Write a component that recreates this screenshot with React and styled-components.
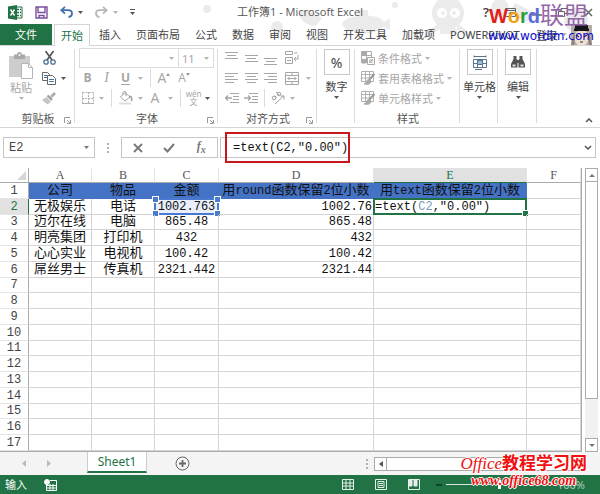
import React from "react";
import styled, { createGlobalStyle, css } from "styled-components";

const GREEN = "#217346";

const Global = createGlobalStyle`
  * { box-sizing: border-box; }
  body { margin: 0; background: #fff; font-family: "Noto Sans", "Noto Sans CJK SC", sans-serif; color: #444; }
  button, input { font: inherit; color: inherit; padding: 0; margin: 0; border: 0; background: none; min-width: 0; }
  svg { display: block; flex: none; }
`;

const Page = styled.div`
  position: relative;
  display: flex;
  flex-direction: column;
  height: 100vh;
  overflow: hidden;
`;

/* ---------- title bar ---------- */
const Backdrop = styled.svg`
  position: absolute;
  top: 0;
  right: 0;
  z-index: -1;
`;
const TitleBar = styled.header`
  display: grid;
  grid-template-columns: 1fr auto 1fr;
  align-items: center;
  height: 24px;
  flex: none;
`;
const QuickAccess = styled.div`
  display: flex;
  align-items: center;
  padding-left: 8px;
  gap: 12px;
`;
const QuickPair = styled.div`
  display: flex;
  align-items: center;
  gap: 5px;
`;
const PlainButton = styled.button`
  display: flex;
  align-items: center;
  justify-content: center;
`;
const Title = styled.h1`
  margin: 0;
  font-size: 11px;
  line-height: 22px;
  font-weight: 400;
  color: #555;
  white-space: pre;
  font-family: "Open Sans", "Noto Sans CJK SC", sans-serif;
`;
const WindowButtons = styled.div`
  display: flex;
  justify-content: flex-end;
  gap: 16px;
  padding-right: 7px;
  font-size: 13px;
  line-height: 20px;
  font-weight: 600;
`;

/* ---------- tabs ---------- */
const Tabs = styled.nav`
  display: flex;
  align-items: stretch;
  gap: 1px;
  height: 22px;
  flex: none;
  border-bottom: 1px solid #d5d5d5;
`;
const Tab = styled.button`
  padding: 0 7px;
  font-size: 11px;
  line-height: 18px;
  white-space: nowrap;
  color: #444;
  ${(p) => p.$file && css`
    background: ${GREEN};
    color: #fff;
    padding: 0 15px;
    margin-right: 1px;
  `}
  ${(p) => p.$active && css`
    color: ${GREEN};
    background: #fff;
    border: 1px solid #d5d5d5;
    border-bottom: 0;
    padding: 0 6px;
    margin-right: 1px;
    margin-bottom: -1px;
    line-height: 16px;
  `}
`;
const Account = styled.div`
  display: flex;
  align-items: center;
  gap: 4px;
  margin-left: auto;
  padding-right: 8px;
  font-size: 11px;
`;

/* ---------- ribbon ---------- */
const Ribbon = styled.section`
  display: flex;
  height: 82px;
  flex: none;
  border-bottom: 1px solid #d5d5d5;
`;
const Group = styled.div`
  position: relative;
  display: flex;
  flex-direction: column;
  width: ${(p) => p.$w}px;
  padding: 2px 3px 0 4px;
  flex: none;
  color: ${(p) => (p.$muted ? "#a6a6a6" : "#444")};
  &::after {
    content: "";
    position: absolute;
    right: 0;
    top: 3px;
    bottom: 4px;
    border-right: 1px solid #dcdcdc;
  }
`;
const GroupBody = styled.div`
  display: flex;
  flex: 1;
  flex-direction: ${(p) => (p.$row ? "row" : "column")};
`;
const GroupLabel = styled.div`
  font-size: 11px;
  line-height: 20px;
  height: 18px;
  text-align: center;
  color: #555;
`;
const Launcher = styled.button`
  position: absolute;
  right: 4px;
  bottom: 3px;
`;
const ToolRow = styled.div`
  display: flex;
  align-items: center;
  height: 20px;
`;
const Tool = styled.button`
  display: flex;
  align-items: center;
  justify-content: center;
  width: ${(p) => p.$w}px;
  height: 18px;
  flex: none;
  font-family: "Open Sans", sans-serif;
  font-size: ${(p) => p.$size || 12}px;
  font-weight: ${(p) => (p.$bold ? 700 : 400)};
  line-height: 16px;
`;
const Italic = styled.i`
  font-family: "Liberation Serif", serif;
  font-size: 14px;
`;
const Under = styled.span`
  border-bottom: 1px solid currentColor;
  line-height: 12px;
`;
const Pinyin = styled.span`
  display: flex;
  flex-direction: column;
  align-items: center;
  font: 8px/8px "Noto Sans", "Noto Sans CJK SC", sans-serif;
`;
const Separator = styled.span`
  width: ${(p) => p.$w}px;
  height: 18px;
  display: flex;
  justify-content: center;
  &::before { content: ""; border-left: 1px solid #dcdcdc; }
`;
const Combo = styled.label`
  display: flex;
  align-items: center;
  justify-content: space-between;
  width: ${(p) => p.$w}px;
  height: 20px;
  padding: 0 4px 0 3px;
  border: 1px solid #dcdcdc;
  margin-right: -1px;
  font-size: 11px;
  input { width: 70%; outline: none; }
`;
const PasteColumn = styled.button`
  display: flex;
  flex-direction: column;
  align-items: center;
  width: 34px;
  padding-top: 4px;
  font-size: 11px;
  line-height: 18px;
  height: 60px;
  color: #a6a6a6;
`;
const ClipTools = styled.div`
  display: flex;
  flex-direction: column;
  padding-left: 3px;
`;
const BigButton = styled.button`
  display: flex;
  flex-direction: column;
  align-items: center;
  font-size: 11px;
  line-height: 19px;
  padding-top: 1px;
  white-space: nowrap;
`;
const BigIcon = styled.span`
  display: flex;
  align-items: center;
  justify-content: center;
  width: 26px;
  height: 26px;
  border: 1px solid #c9c9c9;
  font-size: 14px;
  margin-bottom: 2px;
`;
const StyleTool = styled.button`
  display: flex;
  align-items: center;
  gap: 3px;
  height: 20px;
  padding-left: 2px;
  font-size: 11px;
  white-space: nowrap;
`;
const Collapse = styled.button`
  margin: auto 7px 4px auto;
`;

/* ---------- formula bar ---------- */
const FormulaBar = styled.div`
  display: flex;
  flex: none;
  align-items: stretch;
  height: 39px;
  padding: 9px 4px 9px 3px;
  font: 12px/18px "Liberation Mono", monospace;
`;
const NameBox = styled.label`
  display: flex;
  align-items: center;
  width: 92px;
  border: 1px solid #c6c6c6;
  padding: 0 5px;
  input { flex: 1; outline: none; }
`;
const Grip = styled.span`
  display: flex;
  flex-direction: column;
  gap: 2px;
  justify-content: center;
  align-items: center;
  width: ${(p) => p.$w}px;
  &::before, &::after, i { content: ""; width: 2px; height: 2px; background: #b0b0b0; }
`;
const FormulaButtons = styled.div`
  display: grid;
  grid-template-columns: repeat(3, 1fr);
  width: 97px;
  border: 1px solid #c6c6c6;
  margin-right: 2px;
`;
const Fx = styled.span`
  font: italic 700 12px/16px "Liberation Serif", serif;
  color: #777;
`;
const FormulaBox = styled.label`
  position: relative;
  display: flex;
  align-items: center;
  flex: 1;
  border: 1px solid #c6c6c6;
  padding: 0 3px 0 12px;
  color: #111;
  input { flex: 1; outline: none; }
`;
const RedFrame = styled.span`
  position: absolute;
  left: 4px;
  top: -6px;
  width: 125px;
  height: 31px;
  border: 2px solid #c8161d;
  pointer-events: none;
`;

/* ---------- sheet ---------- */
const SheetArea = styled.main`
  display: flex;
  flex: 1;
  min-height: 0;
  padding-top: 1px;
  background: #fff;
`;
const Sheet = styled.table`
  flex: 1;
  min-width: 0;
  height: 100%;
  table-layout: fixed;
  border-spacing: 0;
  border-right: 1px solid #ababab;
  border-bottom: 1px solid #ababab;
  color: #111;
  font: 12px/14px "Liberation Mono", "Noto Sans CJK SC", monospace;
`;
const Col = styled.col`
  width: ${(p) => p.$w};
`;
const ColHead = styled.th`
  height: 15px;
  padding: 0;
  font: 12px/14px "Liberation Serif", serif;
  color: ${(p) => (p.$on ? GREEN : "#555")};
  background: ${(p) => (p.$on ? "#e1e1e1" : "#fff")};
  border-right: 1px solid ${(p) => (p.$on ? "#e1e1e1" : "#e4e4e4")};
  border-bottom: 1px solid ${(p) => (p.$on ? GREEN : "#ababab")};
`;
const Corner = styled(ColHead)`
  border-right-color: #ababab;
  svg { margin: 0 2px 0 auto; }
`;
const RowHead = styled.th`
  padding: 0;
  font-weight: 400;
  vertical-align: bottom;
  color: ${(p) => (p.$on ? GREEN : "#444")};
  background: ${(p) => (p.$on ? "#e1e1e1" : "#fff")};
  border-right: 1px solid ${(p) => (p.$on ? GREEN : "#ababab")};
  border-bottom: 1px solid #e4e4e4;
`;
const Cell = styled.td`
  position: relative;
  padding: 0 1px;
  white-space: nowrap;
  vertical-align: bottom;
  text-align: ${(p) => p.$align || "center"};
  border-right: 1px solid #d4d4d4;
  border-bottom: 1px solid #d4d4d4;
  ${(p) => p.$head && css`
    background: #4472c4;
    border-color: #4472c4;
  `}
  ${(p) => p.$ref && css`background: #e9effa;`}
`;
const Han = styled.span`
  font-size: 13px;
`;
const RefText = styled.span`
  color: #7f9db9;
`;
const RefFrame = styled.span`
  position: absolute;
  inset: -1px;
  border: 2px solid #4a7ad0;
  pointer-events: none;
`;
const Knob = styled.i`
  position: absolute;
  width: 5px;
  height: 5px;
  background: #4a7ad0;
  outline: 1px solid #fff;
  ${(p) => (p.$top ? "top: -3px;" : "bottom: -3px;")}
  ${(p) => (p.$left ? "left: -3px;" : "right: -3px;")}
`;
const ActiveFrame = styled(RefFrame)`
  border-color: ${GREEN};
  i { background: ${GREEN}; }
`;
const VScroll = styled.div`
  display: flex;
  flex-direction: column;
  width: 13px;
  margin: 0 2px 0 3px;
  flex: none;
`;
const ScrollButton = styled.button`
  display: flex;
  align-items: center;
  justify-content: center;
  width: 13px;
  height: 14px;
  flex: none;
  border: 1px solid #ababab;
  background: #fff;
`;
const VThumb = styled.div`
  flex: 1;
  border: 1px solid #ababab;
  border-top: 0;
  background: #fff;
`;
const VTrack = styled.div`
  height: 39px;
  background: #f1f1f1;
`;

/* ---------- footer ---------- */
const SheetBar = styled.div`
  display: flex;
  align-items: stretch;
  height: 23px;
  flex: none;
  background: #f4f4f4;
`;
const SheetNav = styled.div`
  display: flex;
  align-items: center;
  width: 87px;
  padding-left: 22px;
  gap: 19px;
`;
const SheetTab = styled.button`
  width: 60px;
  height: 21px;
  background: #fff;
  border: 1px solid #ccc;
  border-top: 0;
  border-bottom: 2px solid ${GREEN};
  color: ${GREEN};
  font-size: 12px;
  line-height: 18px;
`;
const AddSheet = styled.button`
  margin-left: 28px;
`;
const HScroll = styled.div`
  display: flex;
  align-items: center;
  margin-left: auto;
  width: 240px;
`;
const HThumb = styled.div`
  flex: 1;
  height: 14px;
  border: 1px solid #ababab;
  border-left: 0;
  background: #fff;
  margin-right: 15px;
`;
const StatusBar = styled.footer`
  display: flex;
  align-items: center;
  height: 19px;
  flex: none;
  padding: 0 15px 0 5px;
  background: ${GREEN};
  color: #fff;
  font-size: 11px;
  line-height: 18px;
`;
const MacroButton = styled.button`
  margin-left: 17px;
`;
const Views = styled.div`
  display: flex;
  gap: 21px;
  margin-left: auto;
  margin-right: 16px;
`;
const Zoom = styled.label`
  display: flex;
  align-items: center;
  gap: 4px;
`;
const ZoomRange = styled.input`
  appearance: none;
  width: 107px;
  height: 1px;
  background: #d7e8de;
  &::-webkit-slider-thumb { appearance: none; width: 3px; height: 9px; background: #fff; }
`;
const ZoomValue = styled.span`
  color: #a9cdb9;
`;

/* ---------- watermarks ---------- */
const TopMark = styled.aside`
  position: absolute;
  right: 6px;
  top: 3px;
  pointer-events: none;
  text-align: center;
  color: #0a0ad0;
  font: 12px/14px "DejaVu Sans", sans-serif;
`;
const MarkTitle = styled.div`
  display: flex;
  align-items: center;
  justify-content: center;
  height: 26px;
  margin-right: 5px;
  font: 700 20px/26px "Liberation Sans", "Noto Sans CJK SC", sans-serif;
`;
const Tint = styled.span`
  color: ${(p) => p.$c};
  ${(p) => p.$large && css`
    font-weight: 400;
    font-size: 24px;
  `}
`;
const BottomMark = styled.aside`
  position: absolute;
  right: 13px;
  bottom: 6px;
  pointer-events: none;
  color: #f01010;
  text-align: center;
  font: italic 700 14px/15px "Liberation Serif", serif;
  text-shadow: 1px 0 #fff, -1px 0 #fff, 0 1px #fff, 0 -1px #fff;
`;
const MarkName = styled.div`
  font: italic 400 17px/18px "Liberation Serif", serif;
`;
const MarkHan = styled.span`
  font: 700 17px/18px "Noto Sans CJK SC", sans-serif;
`;

/* ---------- icons ---------- */
const Caret = ({ c = "#b5b5b5" }) => (
  <svg width="5" height="3" viewBox="0 0 5 3"><path d="M0 0h5L2.500 3z" fill={c} /></svg>
);
const Lines = ({ rows, y = 0 }) => (
  <svg width="13" height="14" viewBox="0 0 13 14">
    {rows.map(([x, w], i) => <path key={i} d={`M${x} ${y + i * 3 + 0.5}h${w}`} stroke="#a6a6a6" />)}
  </svg>
);
const LauncherIcon = () => (
  <svg width="7" height="7" viewBox="0 0 7 7" fill="none" stroke="#999"><path d="M.5 6V.5H6M3 3l3 3M6.500 3v3.500H3" /></svg>
);
const ExcelIcon = () => (
  <svg width="15" height="15" viewBox="0 0 15 15">
    <path d="M8 2h6v11H8" fill="#fff" stroke={GREEN} />
    <path d="M9 4.500h2M9 7.500h2M9 10.500h2M12 4.500h1M12 7.500h1M12 10.500h1" stroke={GREEN} strokeWidth="1.500" />
    <path d="M0 1.500 9 0v15L0 13.500z" fill={GREEN} />
    <path d="M2.500 4.500l4 6M6.500 4.500l-4 6" stroke="#fff" strokeWidth="1.400" />
  </svg>
);
const SaveIcon = () => (
  <svg width="13" height="13" viewBox="0 0 13 13" fill="none" stroke="#7c4f9e" strokeWidth="1.400">
    <path d="M1 1h11v11H1zM3 1v5.500h7V1" /><path d="M4 12V9.500h5V12" />
  </svg>
);
const UndoIcon = ({ c = "#3f6fb0", flip }) => (
  <svg width="13" height="12" viewBox="0 0 13 12" fill="none" stroke={c} strokeWidth="1.800">
    <g transform={flip ? "matrix(-1 0 0 1 13 0)" : undefined}>
      <path d="M5 .8 1.300 4.200 5 7.600" /><path d="M1.500 4.200H8c2.500 0 4 1.500 4 3.300s-1.500 3.300-3.500 3.700" />
    </g>
  </svg>
);
const PasteIcon = () => (
  <svg width="26" height="27" viewBox="0 0 26 27">
    <path d="M1 4h21v21H1z" fill="#cdcdcd" />
    <path d="M6 2.500h3a2.500 2.500 0 0 1 5 0h3V7H6z" fill="#a9a9a9" />
    <circle cx="11.500" cy="3" r="1" fill="#fff" />
    <path d="M13.500 11.500h7l4 4v11h-11z" fill="#fff" stroke="#b5b5b5" /><path d="M20.500 11.500v4h4" fill="none" stroke="#b5b5b5" />
  </svg>
);
const CutIcon = () => (
  <svg width="13" height="14" viewBox="0 0 13 14" fill="none">
    <path d="M2.500 0 9 9M10.500 0 4 9" stroke="#555" strokeWidth="1.700" />
    <circle cx="3" cy="11" r="2.200" stroke="#4a7398" strokeWidth="1.300" /><circle cx="10" cy="11" r="2.200" stroke="#4a7398" strokeWidth="1.300" />
  </svg>
);
const CopyIcon = () => (
  <svg width="14" height="13" viewBox="0 0 14 13" fill="#fff" stroke="#666">
    <path d="M.5.5h5l2 2v6h-7z" /><path d="M2 3.500h3M2 5.500h3" stroke="#4a7398" />
    <path d="M5.500 3.500h5l3 3v6h-8z" /><path d="M7 7.500h5M7 9.500h5" stroke="#4a7398" />
  </svg>
);
const BrushIcon = () => (
  <svg width="14" height="13" viewBox="0 0 14 13">
    <path d="M13 1 9 5" stroke="#aaa" strokeWidth="2.500" /><path d="M5.500 3.500 10 8" stroke="#999" strokeWidth="2" />
    <path d="M4.500 5 9 9.500 5.500 12.500 0 8z" fill="#c4c4c4" />
  </svg>
);
const BorderIcon = () => (
  <svg width="12" height="12" viewBox="0 0 12 12" fill="none" stroke="#b0b0b0"><path d="M.5.500h11v11H.5zM6.500 0v12M0 6.500h12" strokeDasharray="2 1" /><path d="M0 11.500h12" /></svg>
);
const FillIcon = () => (
  <svg width="15" height="14" viewBox="0 0 15 14" fill="none" stroke="#a0a0a0">
    <path d="M7 1.500 12 6 7 10 2.500 6z" /><path d="M5 4V1.500C5 0 8 0 8 1.500V5" /><path d="M12 5c2 1 2 3 1.500 5" strokeWidth="1.600" /><path d="M1 12.500h12" stroke="#ddd" strokeWidth="2" />
  </svg>
);
const WrapIcon = () => (
  <svg width="14" height="14" viewBox="0 0 14 14" fill="none" stroke="#a6a6a6">
    <path d="M.5.500h7v3h-7zM.5 6.500h7v6h-7z" /><path d="M2 9.500h4M9 2h3.500" /><path d="M13 4v4H9.500M11 6 9 8l2 2" />
  </svg>
);
const MergeIcon = () => (
  <svg width="14" height="13" viewBox="0 0 14 13" fill="none" stroke="#a6a6a6">
    <path d="M.5.500h13v12H.500zM0 3.500h14M0 9.500h14M7 0v3.500M7 9.500V13M2.500 6.500h9M4.500 5 3 6.500 4.500 8M9.500 5 11 6.500 9.500 8" />
  </svg>
);
const IndentIcon = ({ right }) => (
  <svg width="14" height="10" viewBox="0 0 14 10" fill="none" stroke="#a6a6a6">
    <path d="M5 .5h9M8 3.500h6M8 6.500h6M5 9.500h9" />
    <path d={right ? "M0 5h6M4 2.500 6.500 5 4 7.500" : "M1 5h6M3 2.500.5 5 3 7.500"} strokeWidth="1.300" />
  </svg>
);
const AngleIcon = () => (
  <svg width="14" height="14" viewBox="0 0 14 14" fill="none" stroke="#a0a0a0">
    <circle cx="3" cy="7" r="1.800" /><path d="m3.500 4.500 2.200 2.200M5 1l4 4" /><circle cx="8" cy="3" r="1.800" /><path d="M4 13 12.500 5M9.500 5H13v3.500" />
  </svg>
);
const CondIcon = () => (
  <svg width="14" height="14" viewBox="0 0 14 14" fill="none" stroke="#aaa">
    <path d="M.5.500h10v11H.5zM0 4.500h11M0 8.500h6M5.500 0v12" /><path d="M1 1h4v3H1zM1 9h4v3H1z" fill="#aaa" />
    <path d="M6.500 6.500h7v7h-7z" fill="#fff" /><path d="m8 12 4-4M8 9h4M8 11h4" />
  </svg>
);
const TableIcon = () => (
  <svg width="14" height="14" viewBox="0 0 14 14" fill="none" stroke="#b0b0b0">
    <path d="M.5.500h12v10H.5zM0 3.500h13M0 7h9M4.500 0v11M8.500 0v7" /><path d="M13.500 3 8 9" stroke="#999" strokeWidth="2" /><path d="M8 8c-3 1-2 4-5 5 4 1 7 0 7-3z" fill="#aaa" />
  </svg>
);
const CellsIcon = () => (
  <svg width="14" height="15" viewBox="0 0 14 15" fill="none" stroke="#5b7590">
    <path d="M1 .5v2M13 .5v2M1 1.500h12" /><path d="M.5 4.500h13v8H.5zM0 8.500h14M4.500 4v9M9.500 4v9" /><path d="M4.500 5.500h5v4h-5z" fill="#9db8d6" /><path d="M2 14.500h7" />
  </svg>
);
const FindIcon = () => (
  <svg width="14" height="12" viewBox="0 0 14 12" fill="#555">
    <path d="M2.500 0h3v3l1 1v7.500H0V8l2.500-5zM8.500 0h3v3L14 8v3.500H7.500V4l1-1z" /><path d="M6 4h2v3H6z" /><path d="M1.500 8.500h3v2h-3zM9.500 8.500h3v2h-3z" fill="#ddd" />
  </svg>
);
const Face = () => (
  <svg width="21" height="20" viewBox="0 0 21 20">
    <path d="M0 0h21v20H0z" fill="#b5aea8" /><ellipse cx="10.500" cy="13" rx="7" ry="8" fill="#efe0d6" />
    <path d="M4 0h13v3l1 1v2H3V4l1-1z" fill="#15151a" /><path d="M3 9c-2 3-1 7-3 11h3l1-8zM18 9c2 3 1 7 3 11h-3l-1-8z" fill="#8a7f7a" />
    <path d="M5 10l3 2M16 10l-3 2M9 17h3" stroke="#3a2a2a" strokeWidth="1.200" />
  </svg>
);

const mixed = (text) =>
  text.split(/([\u4e00-\u9fff]+)/).filter(Boolean).map((s, i) =>
    /[\u4e00-\u9fff]/.test(s) ? <Han key={i}>{s}</Han> : s
  );

const COLUMNS = ["A", "B", "C", "D", "E", "F"];
const WIDTHS = ["29px", "63px", "63px", "64px", "155px", "153px", "auto"];
const HEADINGS = ["公司", "物品", "金额", "用round函数保留2位小数", "用text函数保留2位小数"];
const DATA = [
  ["无极娱乐", "电话", "1002.763", "1002.76"],
  ["迈尔在线", "电脑", "865.48", "865.48"],
  ["明亮集团", "打印机", "432", "432"],
  ["心心实业", "电视机", "100.42", "100.42"],
  ["屌丝男士", "传真机", "2321.442", "2321.44"],
];
const ROWS = Array.from({ length: 17 }, (_, i) => i + 1);

function SheetCell({ row, col }) {
  if (row === 1 && col < 5) return <Cell $head>{mixed(HEADINGS[col])}</Cell>;
  if (row === 2 && col === 2)
    return (
      <Cell $ref>
        {DATA[0][2]}
        <RefFrame><Knob $top $left /><Knob $top /><Knob $left /><Knob /></RefFrame>
      </Cell>
    );
  if (row === 2 && col === 4)
    return (
      <Cell $align="left">
        =text(<RefText>C2</RefText>,"0.00")
        <ActiveFrame><Knob /></ActiveFrame>
      </Cell>
    );
  const value = DATA[row - 2]?.[col];
  return <Cell $align={col === 3 ? "right" : "center"}>{value && mixed(value)}</Cell>;
}

export default function App() {
  return (
    <Page>
      <Global />
      <Backdrop width="400" height="46" viewBox="0 0 400 46" fill="#ebebeb">
        <circle cx="7" cy="9" r="4" /><circle cx="77" cy="27" r="6" /><circle cx="195" cy="5" r="3" />
        <path d="M100 12c8-6 14 2 22 6l-6 8c-8 0-18-6-16-14z" />
        <path d="M142 24c2-10 38-12 42-2l6-4v12l-7-3c-8 10-38 8-41-3z" /><path d="M158 10h10v8h-10z" />
        <circle cx="248" cy="13" r="16" /><path d="M240 24h17v10h-17zM224 34l14-10 3 4-14 10zM272 34l-14-10-3 4 14 10z" />
        <circle cx="242" cy="13" r="5" fill="#fff" /><circle cx="255" cy="13" r="5" fill="#fff" /><circle cx="243" cy="13" r="2" /><circle cx="254" cy="13" r="2" />
        <circle cx="300" cy="8" r="9" /><path d="M315 3l20 10-8 9-18-8z" /><circle cx="376" cy="20" r="12" />
      </Backdrop>

      <TitleBar>
        <QuickAccess>
          <ExcelIcon />
          <PlainButton aria-label="保存"><SaveIcon /></PlainButton>
          <QuickPair>
            <PlainButton aria-label="撤消"><UndoIcon /></PlainButton>
            <PlainButton aria-label="撤消选项"><Caret c="#555" /></PlainButton>
          </QuickPair>
          <QuickPair>
            <PlainButton aria-label="恢复"><UndoIcon flip c="#b8b8b8" /></PlainButton>
            <PlainButton aria-label="恢复选项"><Caret /></PlainButton>
          </QuickPair>
          <PlainButton aria-label="自定义">
            <svg width="5" height="6" viewBox="0 0 5 6" fill="#555"><path d="M0 0h5v1H0zM0 3h5L2.500 6z" /></svg>
          </PlainButton>
        </QuickAccess>
        <Title>工作簿1 - Microsoft Excel</Title>
        <WindowButtons>
          <PlainButton aria-label="帮助">?</PlainButton>
          <PlainButton aria-label="功能区选项">
            <svg width="11" height="9" viewBox="0 0 11 9" fill="none" stroke="#666"><path d="M.5.500h10v8H.5zM0 2.500h11M5.500 8V4M3.500 6l2-2 2 2" /></svg>
          </PlainButton>
          <PlainButton aria-label="最小化"><svg width="10" height="9" viewBox="0 0 10 9" stroke="#666"><path d="M0 7h10" strokeWidth="1.500" /></svg></PlainButton>
          <PlainButton aria-label="还原"><svg width="10" height="9" viewBox="0 0 10 9" fill="none" stroke="#666"><path d="M.5 3.500h6v5h-6zM3 3V.5h6.500v5H7" /></svg></PlainButton>
          <PlainButton aria-label="关闭"><svg width="9" height="9" viewBox="0 0 9 9" stroke="#666" strokeWidth="1.500"><path d="m1 1 7 7M8 1 1 8" /></svg></PlainButton>
        </WindowButtons>
      </TitleBar>

      <Tabs>
        <Tab $file>文件</Tab>
        <Tab $active>开始</Tab>
        <Tab>插入</Tab>
        <Tab>页面布局</Tab>
        <Tab>公式</Tab>
        <Tab>数据</Tab>
        <Tab>审阅</Tab>
        <Tab>视图</Tab>
        <Tab>开发工具</Tab>
        <Tab>加载项</Tab>
        <Tab>POWERPIVOT</Tab>
        <Account><span>登录</span><Caret /><Face /></Account>
      </Tabs>

      <Ribbon>
        <Group $w={75} $muted>
          <GroupBody $row>
            <PasteColumn><PasteIcon />粘贴<Caret /></PasteColumn>
            <ClipTools>
              <ToolRow><Tool $w={16} aria-label="剪切"><CutIcon /></Tool></ToolRow>
              <ToolRow><Tool $w={16} aria-label="复制"><CopyIcon /></Tool><Tool $w={12} aria-label="复制选项"><Caret c="#555" /></Tool></ToolRow>
              <ToolRow><Tool $w={16} aria-label="格式刷"><BrushIcon /></Tool></ToolRow>
            </ClipTools>
          </GroupBody>
          <GroupLabel>剪贴板</GroupLabel>
          <Launcher aria-label="剪贴板设置"><LauncherIcon /></Launcher>
        </Group>

        <Group $w={143} $muted>
          <GroupBody>
            <ToolRow>
              <Combo $w={100}><input aria-label="字体" defaultValue="" /><Caret /></Combo>
              <Combo $w={36}><input aria-label="字号" defaultValue="11" /><Caret /></Combo>
            </ToolRow>
            <ToolRow>
              <Tool $w={17} $bold>B</Tool><Tool $w={21}><Italic>I</Italic></Tool><Tool $w={17} $bold><Under>U</Under></Tool>
              <Tool $w={12} aria-label="下划线选项"><Caret /></Tool><Separator $w={8} />
              <Tool $w={20} $size={14} aria-label="增大字号">A<svg width="4" height="10" viewBox="0 0 4 10"><path d="M0 3h4L2 0z" fill="#999" /></svg></Tool>
              <Tool $w={20} aria-label="减小字号">A<svg width="4" height="10" viewBox="0 0 4 10"><path d="M0 0h4L2 3z" fill="#999" /></svg></Tool>
            </ToolRow>
            <ToolRow>
              <Tool $w={17} aria-label="边框"><BorderIcon /></Tool><Tool $w={11} aria-label="边框选项"><Caret /></Tool><Separator $w={8} />
              <Tool $w={20} aria-label="填充颜色"><FillIcon /></Tool><Tool $w={11} aria-label="填充选项"><Caret /></Tool>
              <Tool $w={18} $size={14}>A</Tool><Tool $w={12} aria-label="颜色选项"><Caret /></Tool><Separator $w={8} />
              <Tool $w={19}><Pinyin><span>wén</span><span>文</span></Pinyin></Tool><Tool $w={9} aria-label="拼音选项"><Caret c="#555" /></Tool>
            </ToolRow>
          </GroupBody>
          <GroupLabel>字体</GroupLabel>
          <Launcher aria-label="字体设置"><LauncherIcon /></Launcher>
        </Group>

        <Group $w={99} $muted>
          <GroupBody>
            <ToolRow>
              <Tool $w={19} aria-label="顶端对齐"><Lines rows={[[0, 13], [2, 9], [0, 13]]} y={1} /></Tool>
              <Tool $w={20} aria-label="垂直居中"><Lines rows={[[0, 13], [2, 9], [0, 13]]} y={4} /></Tool>
              <Tool $w={19} aria-label="底端对齐"><Lines rows={[[0, 13], [2, 9], [0, 13]]} y={7} /></Tool>
              <Tool $w={24} aria-label="自动换行"><WrapIcon /></Tool>
            </ToolRow>
            <ToolRow>
              <Tool $w={19} aria-label="左对齐"><Lines rows={[[0, 13], [0, 9], [0, 13], [0, 9]]} y={2} /></Tool>
              <Tool $w={20} aria-label="居中"><Lines rows={[[0, 13], [2, 9], [0, 13], [2, 9]]} y={2} /></Tool>
              <Tool $w={19} aria-label="右对齐"><Lines rows={[[0, 13], [4, 9], [0, 13], [4, 9]]} y={2} /></Tool>
              <Tool $w={24} aria-label="合并后居中"><MergeIcon /></Tool><Tool $w={8} aria-label="合并选项"><Caret /></Tool>
            </ToolRow>
            <ToolRow>
              <Tool $w={19} aria-label="减少缩进"><IndentIcon /></Tool><Tool $w={20} aria-label="增加缩进"><IndentIcon right /></Tool>
              <Separator $w={7} /><Tool $w={20} aria-label="方向"><AngleIcon /></Tool><Tool $w={8} aria-label="方向选项"><Caret /></Tool>
            </ToolRow>
          </GroupBody>
          <GroupLabel>对齐方式</GroupLabel>
          <Launcher aria-label="对齐设置"><LauncherIcon /></Launcher>
        </Group>

        <Group $w={38}><BigButton><BigIcon>%</BigIcon>数字<Caret c="#555" /></BigButton></Group>

        <Group $w={105} $muted>
          <GroupBody>
            <StyleTool><CondIcon />条件格式<Caret /></StyleTool>
            <StyleTool><TableIcon />套用表格格式<Caret /></StyleTool>
            <StyleTool><TableIcon />单元格样式<Caret /></StyleTool>
          </GroupBody>
          <GroupLabel>样式</GroupLabel>
        </Group>

        <Group $w={38}><BigButton><BigIcon><CellsIcon /></BigIcon>单元格<Caret c="#555" /></BigButton></Group>
        <Group $w={39}><BigButton><BigIcon><FindIcon /></BigIcon>编辑<Caret c="#555" /></BigButton></Group>
        <Collapse aria-label="折叠功能区"><svg width="8" height="5" viewBox="0 0 8 5" fill="none" stroke="#555" strokeWidth="1.500"><path d="m1 4 3-3 3 3" /></svg></Collapse>
      </Ribbon>

      <FormulaBar>
        <NameBox><input aria-label="名称框" defaultValue="E2" /><Caret c="#777" /></NameBox>
        <Grip $w={26}><i /></Grip>
        <FormulaButtons>
          <PlainButton aria-label="取消"><svg width="10" height="10" viewBox="0 0 10 10" stroke="#777" strokeWidth="1.800"><path d="m1 1 8 8M9 1 1 9" /></svg></PlainButton>
          <PlainButton aria-label="输入"><svg width="12" height="10" viewBox="0 0 12 10" fill="none" stroke="#777" strokeWidth="2"><path d="m1 5 3.500 3.500L11 1" /></svg></PlainButton>
          <PlainButton aria-label="插入函数"><Fx>f<sub>x</sub></Fx></PlainButton>
        </FormulaButtons>
        <FormulaBox>
          <input aria-label="编辑栏" defaultValue={'=text(C2,"0.00")'} />
          <svg width="8" height="5" viewBox="0 0 8 5" fill="none" stroke="#555" strokeWidth="1.500"><path d="m1 1 3 3 3-3" /></svg>
          <RedFrame />
        </FormulaBox>
      </FormulaBar>

      <SheetArea>
        <Sheet>
          <colgroup>{WIDTHS.map((w, i) => <Col key={i} $w={w} />)}</colgroup>
          <thead>
            <tr>
              <Corner><svg width="9" height="9" viewBox="0 0 9 9"><path d="M9 0v9H0z" fill="#d6d6d6" /></svg></Corner>
              {COLUMNS.map((c) => <ColHead key={c} $on={c === "E"}>{c}</ColHead>)}
            </tr>
          </thead>
          <tbody>
            {ROWS.map((r) => (
              <tr key={r}>
                <RowHead $on={r === 2}>{r}</RowHead>
                {COLUMNS.map((c, i) => <SheetCell key={c} row={r} col={i} />)}
              </tr>
            ))}
          </tbody>
        </Sheet>
        <VScroll>
          <ScrollButton aria-label="向上"><svg width="6" height="3" viewBox="0 0 6 3"><path d="M0 3h6L3 0z" fill="#777" /></svg></ScrollButton>
          <VThumb /><VTrack />
          <ScrollButton aria-label="向下"><svg width="6" height="3" viewBox="0 0 6 3"><path d="M0 0h6L3 3z" fill="#777" /></svg></ScrollButton>
        </VScroll>
      </SheetArea>

      <SheetBar>
        <SheetNav>
          <PlainButton aria-label="上一个"><svg width="5" height="7" viewBox="0 0 5 7"><path d="M4 0v7L0 3.500z" fill="#bbb" /></svg></PlainButton>
          <PlainButton aria-label="下一个"><svg width="5" height="7" viewBox="0 0 5 7"><path d="M1 0v7l4-3.500z" fill="#bbb" /></svg></PlainButton>
        </SheetNav>
        <SheetTab>Sheet1</SheetTab>
        <AddSheet aria-label="新工作表"><svg width="15" height="15" viewBox="0 0 15 15" fill="none" stroke="#666"><circle cx="7.500" cy="7.500" r="6.500" /><path d="M7.500 4v7M4 7.500h7" strokeWidth="1.800" /></svg></AddSheet>
        <HScroll>
          <Grip $w={14}><i /></Grip>
          <ScrollButton aria-label="向左"><svg width="4" height="6" viewBox="0 0 4 6"><path d="M4 0v6L0 3z" fill="#555" /></svg></ScrollButton>
          <HThumb />
        </HScroll>
      </SheetBar>

      <StatusBar>
        <span>输入</span>
        <MacroButton aria-label="录制宏">
          <svg width="13" height="12" viewBox="0 0 13 12" fill="none" stroke="#fff"><path d="M2.500 5v6.500h10v-10H6M3 6.500h9M3 9h9M6 5v6M9 5v6" /><circle cx="3" cy="3" r="2.500" fill="#fff" /></svg>
        </MacroButton>
        <Views>
          <PlainButton aria-label="普通"><svg width="12" height="11" viewBox="0 0 12 11" fill="none" stroke="#e4f0e9"><path d="M.5.500h11v10H.5zM4 0v11M8 0v11M0 4h12M0 7h12" /></svg></PlainButton>
          <PlainButton aria-label="页面布局视图"><svg width="12" height="11" viewBox="0 0 12 11" fill="none" stroke="#e4f0e9"><path d="M.5.500h11v10H.5zM3 2.500h6v6H3zM4 4.500h4M4 6.500h4" /></svg></PlainButton>
          <PlainButton aria-label="分页预览"><svg width="12" height="11" viewBox="0 0 12 11" fill="none" stroke="#e4f0e9"><path d="M.5.500h11v10H.5z" /><path d="M1 1h3v6H1zM6 1h3v6H6z" fill="#e4f0e9" /></svg></PlainButton>
        </Views>
        <Zoom>
          <svg width="6" height="2" viewBox="0 0 6 2"><path d="M0 1h6" stroke="#0d4526" strokeWidth="2" /></svg>
          <ZoomRange type="range" aria-label="缩放" />
          <ZoomValue>100%</ZoomValue>
        </Zoom>
      </StatusBar>

      <TopMark>
        <MarkTitle><Tint $c="#e0201b">W</Tint><Tint $c="#f0a010">o</Tint><Tint $c="#25a035">r</Tint><Tint $c="#5a6be0">d</Tint><Tint $c="#9467a8" $large>联盟</Tint></MarkTitle>
        www.wordlm.com
      </TopMark>
      <BottomMark>
        <MarkName>Office<MarkHan>教程学习网</MarkHan></MarkName>
        www.office68.com
      </BottomMark>
    </Page>
  );
}
